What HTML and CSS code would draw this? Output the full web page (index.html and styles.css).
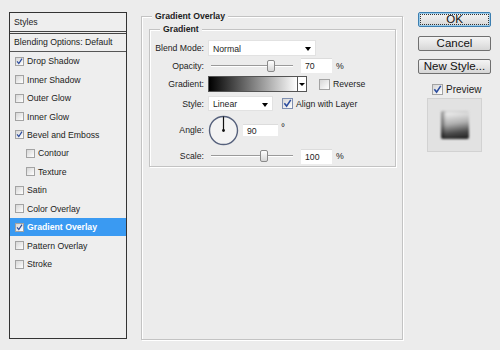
FILE: index.html
```html
<!DOCTYPE html>
<html lang="en">
<head>
    <meta charset="UTF-8">
    <title>Layer Style - Gradient Overlay</title>
    <link rel="stylesheet" href="styles.css">
</head>
<body>

    <div class="dialog">

        <!-- Lista de estilos -->
        <div class="styles-list">
            <div class="list-head">Styles</div>
            <div class="list-blend">Blending Options: Default</div>
            <div class="item"><span class="cb on"><svg viewBox="0 0 8 8"><path d="M1.2 3.8 L3.2 6.3 L6.9 0.8"/></svg></span>Drop Shadow</div>
            <div class="item"><span class="cb"></span>Inner Shadow</div>
            <div class="item"><span class="cb"></span>Outer Glow</div>
            <div class="item"><span class="cb"></span>Inner Glow</div>
            <div class="item"><span class="cb on"><svg viewBox="0 0 8 8"><path d="M1.2 3.8 L3.2 6.3 L6.9 0.8"/></svg></span>Bevel and Emboss</div>
            <div class="item sub"><span class="cb"></span>Contour</div>
            <div class="item sub"><span class="cb"></span>Texture</div>
            <div class="item"><span class="cb"></span>Satin</div>
            <div class="item"><span class="cb"></span>Color Overlay</div>
            <div class="item active"><span class="cb on"><svg viewBox="0 0 8 8"><path d="M1.2 3.8 L3.2 6.3 L6.9 0.8"/></svg></span>Gradient Overlay</div>
            <div class="item"><span class="cb"></span>Pattern Overlay</div>
            <div class="item"><span class="cb"></span>Stroke</div>
        </div>

        <!-- Painel central -->
        <fieldset class="group outer">
            <legend>Gradient Overlay</legend>
            <fieldset class="group inner">
                <legend>Gradient</legend>
                <div class="form">
                    <label>Blend Mode:</label>
                    <div class="ctrl"><div class="select wide">Normal</div></div>

                    <label>Opacity:</label>
                    <div class="ctrl">
                        <div class="slider"><span class="thumb" style="left: 72%"></span></div>
                        <div class="num">70</div>
                        <span class="unit">%</span>
                    </div>

                    <label>Gradient:</label>
                    <div class="ctrl">
                        <div class="gradient"><span class="bar"></span><span class="drop"></span></div>
                        <span class="cb big rev"></span><span>Reverse</span>
                    </div>

                    <label>Style:</label>
                    <div class="ctrl">
                        <div class="select short">Linear</div>
                        <span class="cb big align"><svg viewBox="0 0 8 8"><path d="M1.2 3.8 L3.2 6.3 L6.9 0.8"/></svg></span><span>Align with Layer</span>
                    </div>

                    <label>Angle:</label>
                    <div class="ctrl">
                        <svg class="dial" width="31" height="31" viewBox="0 0 31 31">
                            <circle cx="15.5" cy="15.5" r="14" fill="#f3f3f3" stroke="#56617c" stroke-width="1.4"/>
                            <line x1="15.5" y1="15.5" x2="15.5" y2="1.5" stroke="#111" stroke-width="1.2"/>
                            <circle cx="15.5" cy="15.5" r="1.4" fill="#111"/>
                        </svg>
                        <div class="num angle">90</div>
                        <span class="deg">°</span>
                    </div>

                    <label>Scale:</label>
                    <div class="ctrl">
                        <div class="slider"><span class="thumb" style="left: 63%"></span></div>
                        <div class="num">100</div>
                        <span class="unit">%</span>
                    </div>
                </div>
            </fieldset>
        </fieldset>

        <!-- Botões -->
        <div class="actions">
            <button class="btn ok">OK</button>
            <button class="btn">Cancel</button>
            <button class="btn">New Style...</button>
            <div class="preview-row"><span class="cb big"><svg viewBox="0 0 8 8"><path d="M1.2 3.8 L3.2 6.3 L6.9 0.8"/></svg></span>Preview</div>
            <div class="thumb-box"><div class="thumb-square"></div></div>
        </div>

    </div>

</body>
</html>
```

FILE: styles.css
```css
body {
    margin: 0;
    width: 500px;
    height: 350px;
    overflow: hidden;
    background-color: #ececec;
    font-family: 'Liberation Sans', Arial, sans-serif;
    font-size: 8.7px;
    color: #1c1c1c;
}

.dialog {
    display: flex;
    align-items: flex-start;
    padding-left: 9px;
}

/* Lista de estilos */
.styles-list {
    margin-top: 12px;
    width: 118px;
    height: 327px;
    box-sizing: border-box;
    border: 1px solid #333;
    background-color: #eeeeee;
}

.list-head {
    height: 18px;
    line-height: 18px;
    padding-left: 4px;
    border-bottom: 3px double #444;
}

.list-blend {
    height: 17px;
    line-height: 17px;
    padding-left: 4px;
    border-bottom: 1px solid #555;
}

.item {
    height: 18.45px;
    display: flex;
    align-items: center;
    gap: 2px;
    padding-left: 5px;
}

.item.sub {
    padding-left: 16px;
}

.item.active {
    background-color: #3a9af2;
    color: #fff;
    font-weight: bold;
}

.cb {
    display: inline-block;
    width: 7px;
    height: 7px;
    border: 1px solid #a3a3a3;
    background: linear-gradient(135deg, #d6d6d6, #ffffff);
    flex-shrink: 0;
    margin-right: 1px;
}

.cb svg {
    display: block;
    width: 7px;
    height: 7px;
}

.cb svg path {
    fill: none;
    stroke: #2b4c9e;
    stroke-width: 1.4;
}

.cb.big {
    width: 9px;
    height: 9px;
}

.cb.big svg {
    width: 9px;
    height: 9px;
}

/* Grupos */
.group {
    margin: 0;
    padding: 0;
    min-width: 0;
    border: 1px solid #c3c3c3;
    box-shadow: 1px 1px 0 #fff, inset 1px 1px 0 #fff;
}

.group legend {
    margin-left: 10px;
    padding: 0 3px;
    line-height: 12px;
    font-weight: bold;
    background-color: #ececec;
}

.outer {
    margin: 10px 0 0 14px;
    width: 262px;
    height: 330px;
    box-sizing: border-box;
    padding: 0 6px 0 7px;
}

.outer > legend {
    margin-left: 3px;
}

.inner {
    margin-top: 1px;
}

.form {
    display: grid;
    grid-template-columns: 54px 1fr;
    grid-template-rows: 16px 19px 18px 21px 32px 20px;
    column-gap: 4px;
    align-items: center;
    padding-top: 5px;
}

.form label {
    text-align: right;
}

.ctrl {
    display: flex;
    align-items: center;
}

.select {
    position: relative;
    height: 16px;
    line-height: 16px;
    box-sizing: border-box;
    padding-left: 4px;
    background-color: #fff;
    border: 1px solid #e2e2e2;
}

.select::after {
    content: "";
    position: absolute;
    right: 4px;
    top: 6px;
    border-left: 3.5px solid transparent;
    border-right: 3.5px solid transparent;
    border-top: 4px solid #000;
}

.select.wide {
    width: 108px;
}

.select.short {
    width: 65px;
    height: 15px;
    line-height: 15px;
}

.slider {
    position: relative;
    width: 82px;
    height: 1px;
    margin-left: 3px;
    background-color: #9a9a9a;
    border-bottom: 1px solid #fff;
}

.slider .thumb {
    position: absolute;
    top: -5px;
    width: 6px;
    height: 10px;
    margin-left: -3px;
    border: 1px solid #8a8a8a;
    border-radius: 2px;
    background: linear-gradient(#ffffff, #d6d6d6);
}

.num {
    width: 31px;
    height: 15px;
    line-height: 15px;
    box-sizing: border-box;
    padding-left: 4px;
    background-color: #fff;
    border-top: 1px solid #dcdcdc;
    margin-left: 8px;
}

.unit {
    margin-left: 4px;
}

.gradient {
    display: flex;
    width: 99px;
    height: 16px;
    box-sizing: border-box;
    border: 1px solid #555;
}

.gradient .bar {
    flex: 1;
    background: linear-gradient(90deg, #000, #fff);
    border-right: 1px solid #555;
}

.gradient .drop {
    position: relative;
    width: 8px;
    background-color: #fff;
}

.gradient .drop::after {
    content: "";
    position: absolute;
    left: 1px;
    top: 6px;
    border-left: 3px solid transparent;
    border-right: 3px solid transparent;
    border-top: 3px solid #000;
}

.cb.rev {
    margin-left: 12px;
    margin-right: 3px;
}

.cb.align {
    margin-left: 9px;
    margin-right: 3px;
    border-color: #7f8fb0;
}

.dial {
    display: block;
}

.num.angle {
    width: 35px;
    height: 12px;
    line-height: 12px;
    margin-left: 4px;
}

.deg {
    margin-left: 3px;
    margin-top: -6px;
    font-size: 10px;
}

/* Botões */
.actions {
    margin: 12px 0 0 15px;
    width: 73px;
    display: flex;
    flex-direction: column;
}

.btn {
    height: 15px;
    padding: 0;
    margin-bottom: 8.5px;
    font-family: 'Liberation Sans', Arial, sans-serif;
    font-size: 11.5px;
    line-height: 13px;
    color: #111;
    border: 1px solid #707070;
    border-radius: 2px;
    background: linear-gradient(#f4f4f4, #e6e6e6 50%, #d6d6d6);
}

.btn.ok {
    border-color: #3c7fb1;
    box-shadow: inset 0 0 0 1px #9ccbe9;
    outline: 1px dotted #333;
    outline-offset: -3px;
}

.preview-row {
    display: flex;
    align-items: center;
    gap: 2px;
    margin-top: 1px;
    padding-left: 14px;
    font-size: 10px;
}

.thumb-box {
    margin: 3px 0 0 9px;
    width: 55px;
    height: 54px;
    box-sizing: border-box;
    border: 1px solid #d2d2d2;
    background-color: #e2e2e2;
    display: flex;
    align-items: center;
    justify-content: center;
}

.thumb-square {
    width: 28px;
    height: 28px;
    border-radius: 2px;
    background: linear-gradient(172deg, #f6f6f6 5%, #b0b0b0 45%, #4a4a4a 75%, #1e1e1e);
    filter: blur(1px);
    box-shadow: inset 3px 0 3px rgba(0, 0, 0, 0.4);
}
```
